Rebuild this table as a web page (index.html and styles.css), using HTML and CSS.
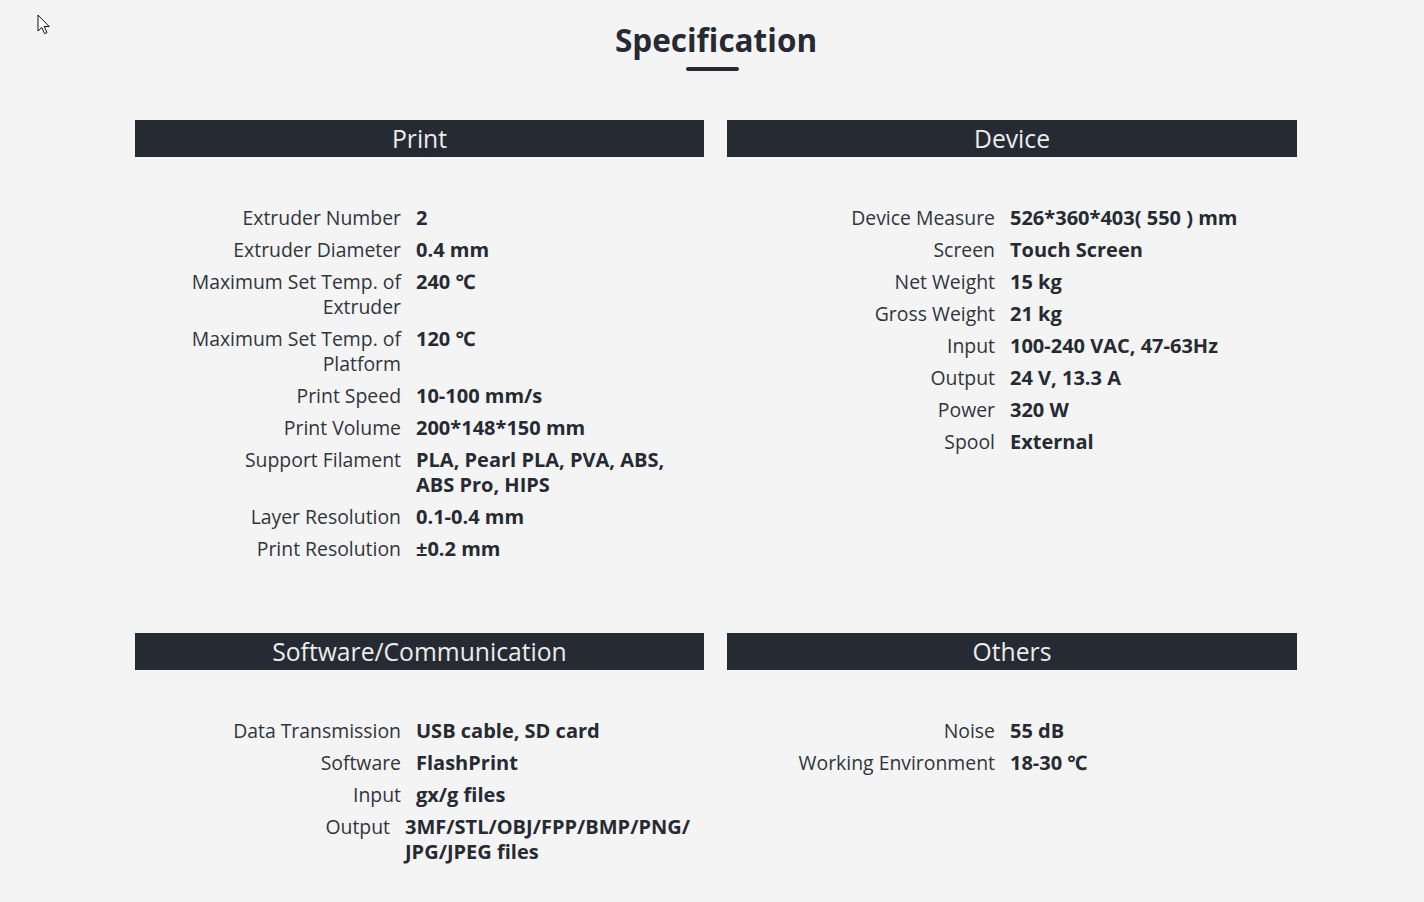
FILE: index.html
```html
<!DOCTYPE html>
<html lang="en">
<head>
<meta charset="utf-8">
<title>Specification</title>
<link rel="stylesheet" href="styles.css">
</head>
<body>
<svg class="cursor" width="14" height="21" viewBox="0 0 14 21" aria-hidden="true">
  <path d="M1 1 L1 17 L4.8 13.4 L7.6 19.6 L10 18.6 L7.3 12.5 L12.2 12.5 Z" fill="#fff" stroke="#111" stroke-width="1" stroke-linejoin="miter"/>
</svg>
<div class="page">
  <header class="spec-header">
    <h1 class="spec-title">Specification</h1>
    <span class="spec-underline"></span>
  </header>
  <div class="spec-grid">
    <section class="spec-card">
      <h2 class="spec-head">Print</h2>
      <dl class="spec-list">
        <div class="spec-row"><dt>Extruder Number</dt><dd>2</dd></div>
        <div class="spec-row"><dt>Extruder Diameter</dt><dd>0.4 mm</dd></div>
        <div class="spec-row"><dt>Maximum Set Temp. of Extruder</dt><dd>240 ℃</dd></div>
        <div class="spec-row"><dt>Maximum Set Temp. of Platform</dt><dd>120 ℃</dd></div>
        <div class="spec-row"><dt>Print Speed</dt><dd>10-100 mm/s</dd></div>
        <div class="spec-row"><dt>Print Volume</dt><dd>200*148*150 mm</dd></div>
        <div class="spec-row"><dt>Support Filament</dt><dd>PLA, Pearl PLA, PVA, ABS, ABS Pro, HIPS</dd></div>
        <div class="spec-row"><dt>Layer Resolution</dt><dd>0.1-0.4 mm</dd></div>
        <div class="spec-row"><dt>Print Resolution</dt><dd>±0.2 mm</dd></div>
      </dl>
    </section>
    <section class="spec-card spec-card--right">
      <h2 class="spec-head">Device</h2>
      <dl class="spec-list">
        <div class="spec-row"><dt>Device Measure</dt><dd>526*360*403( 550 ) mm</dd></div>
        <div class="spec-row"><dt>Screen</dt><dd>Touch Screen</dd></div>
        <div class="spec-row"><dt>Net Weight</dt><dd>15 kg</dd></div>
        <div class="spec-row"><dt>Gross Weight</dt><dd>21 kg</dd></div>
        <div class="spec-row"><dt>Input</dt><dd>100-240 VAC, 47-63Hz</dd></div>
        <div class="spec-row"><dt>Output</dt><dd>24 V, 13.3 A</dd></div>
        <div class="spec-row"><dt>Power</dt><dd>320 W</dd></div>
        <div class="spec-row"><dt>Spool</dt><dd>External</dd></div>
      </dl>
    </section>
    <section class="spec-card">
      <h2 class="spec-head">Software/Communication</h2>
      <dl class="spec-list">
        <div class="spec-row"><dt>Data Transmission</dt><dd>USB cable, SD card</dd></div>
        <div class="spec-row"><dt>Software</dt><dd>FlashPrint</dd></div>
        <div class="spec-row"><dt>Input</dt><dd>gx/g files</dd></div>
        <div class="spec-row spec-row--wide"><dt>Output</dt><dd>3MF/STL/OBJ/FPP/BMP/PNG/ JPG/JPEG files</dd></div>
      </dl>
    </section>
    <section class="spec-card spec-card--right">
      <h2 class="spec-head">Others</h2>
      <dl class="spec-list">
        <div class="spec-row"><dt>Noise</dt><dd>55 dB</dd></div>
        <div class="spec-row"><dt>Working Environment</dt><dd>18-30 ℃</dd></div>
      </dl>
    </section>
  </div>
</div>
</body>
</html>
```

FILE: styles.css
```css
html, body {
  margin: 0;
  padding: 0;
  background: #f4f4f4;
}

body {
  font-family: "Open Sans", "Noto Sans", "Noto Sans CJK SC", sans-serif;
  color: #262a33;
  min-height: 902px;
  position: relative;
}

.cursor {
  position: absolute;
  left: 37px;
  top: 14px;
}

.page {
  padding-left: 8px;
}

.spec-header {
  display: flex;
  flex-direction: column;
  align-items: center;
  padding-top: 20px;
}

.spec-title {
  margin: 0;
  font-size: 31.5px;
  line-height: 40px;
  font-weight: 700;
  color: #262a33;
}

.spec-underline {
  display: block;
  width: 53px;
  height: 4px;
  margin-top: 7px;
  margin-right: 7px;
  border-radius: 2px;
  background: #262a33;
}

.spec-grid {
  width: 1162px;
  margin: 49px auto 0;
  display: grid;
  grid-template-columns: 569px 570px;
  column-gap: 23px;
  row-gap: 72px;
  align-items: start;
}

.spec-head {
  margin: 0;
  height: 37px;
  line-height: 37px;
  background: #262a33;
  color: #ececec;
  text-align: center;
  font-size: 24.7px;
  font-weight: 400;
}

.spec-list {
  margin: 0;
  padding-top: 48px;
  display: flex;
  flex-direction: column;
  gap: 7px;
}

.spec-row {
  display: grid;
  grid-template-columns: 266px 1fr;
  column-gap: 15px;
  line-height: 25px;
}

.spec-card--right .spec-row {
  grid-template-columns: 268px 1fr;
}

.spec-row dt {
  margin: 0;
  text-align: right;
  font-size: 19.4px;
  font-weight: 400;
  color: #30343c;
}

.spec-row dd {
  margin: 0;
  font-size: 20px;
  font-weight: 700;
  color: #262a33;
  padding-right: 30px;
}

.spec-card .spec-row--wide {
  grid-template-columns: 255px 1fr;
}

.spec-row--wide dd {
  padding-right: 0;
}
```
